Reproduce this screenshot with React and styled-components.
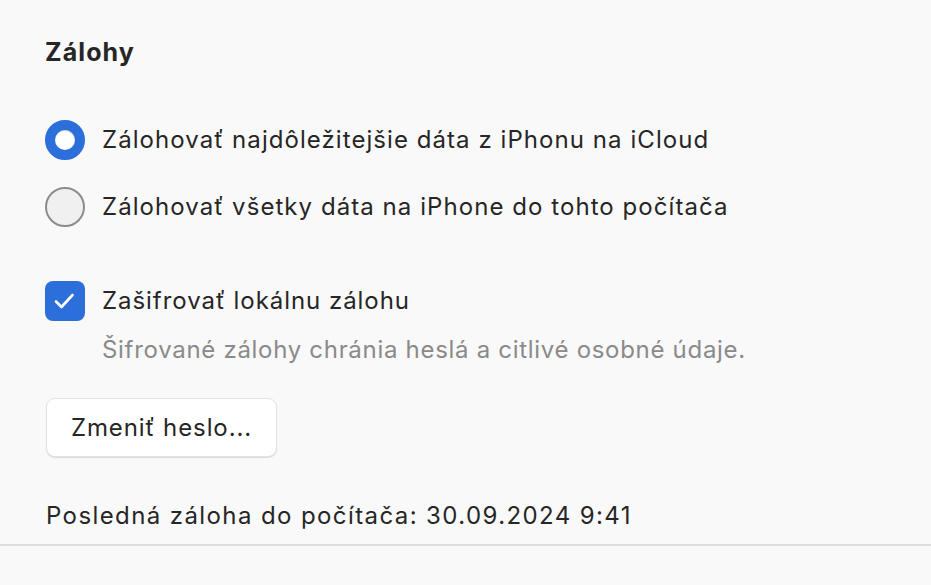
import React, { useState } from 'react';
import styled, { createGlobalStyle } from 'styled-components';

const GlobalStyle = createGlobalStyle`
  html, body {
    margin: 0;
    padding: 0;
    background: #f9f9f9;
  }
  body {
    font-family: Inter, "Noto Sans", "Liberation Sans", sans-serif;
    color: #262626;
  }
`;

const Panel = styled.div`
  width: 931px;
  height: 585px;
  display: flex;
  flex-direction: column;
  box-sizing: border-box;
`;

const Content = styled.div`
  display: flex;
  flex-direction: column;
  padding: 36px 0 0 45px;
`;

const Title = styled.h2`
  margin: 0;
  font-size: 25px;
  font-weight: 700;
  line-height: 32px;
  letter-spacing: 1.1px;
`;

const Options = styled.div`
  display: flex;
  flex-direction: column;
  gap: 27px;
  margin-top: 52px;
`;

const Row = styled.label`
  display: flex;
  align-items: center;
  gap: 17px;
  font-size: 24px;
  letter-spacing: ${(p) => p.$spacing || '1.06px'};
  line-height: 40px;
  cursor: default;
`;

const Radio = styled.span`
  width: 40px;
  height: 40px;
  border-radius: 50%;
  box-sizing: border-box;
  flex-shrink: 0;
  background: ${(p) => (p.checked ? '#ffffff' : '#f0f0f0')};
  border: ${(p) => (p.checked ? '10.5px solid #2c6fdb' : '2px solid #8c8c8c')};
  box-shadow: ${(p) => (p.checked ? 'inset 0 1px 1px rgba(0,0,0,0.15)' : 'none')};
`;

const Checkbox = styled.span`
  width: 40px;
  height: 40px;
  border-radius: 8px;
  background: #2c6fdb;
  flex-shrink: 0;
  display: flex;
  align-items: center;
  justify-content: center;
`;

const CheckGroup = styled.div`
  display: flex;
  flex-direction: column;
  margin-top: 54px;
`;

const Hint = styled.p`
  margin: 14px 0 0 57px;
  font-size: 24px;
  letter-spacing: 0.7px;
  line-height: 30px;
  color: #8a8a8a;
`;

const Button = styled.button`
  margin-top: 33px;
  align-self: flex-start;
  width: 231px;
  height: 59px;
  margin-left: 1px;
  background: #ffffff;
  border: 1px solid #e2e2e2;
  border-radius: 9px;
  box-shadow: 0 1px 1px rgba(0, 0, 0, 0.12);
  font-family: inherit;
  font-size: 24px;
  letter-spacing: 0.9px;
  color: #262626;
`;

const Footer = styled.p`
  margin: 44px 0 0 1px;
  font-size: 24px;
  letter-spacing: 1.4px;
  line-height: 30px;
`;

const Divider = styled.hr`
  margin: 13px 0 0;
  border: none;
  height: 2px;
  background: #dddddd;
`;

const options = [
  'Zálohovať najdôležitejšie dáta z iPhonu na iCloud',
  'Zálohovať všetky dáta na iPhone do tohto počítača',
];

const App = () => {
  const [selected, setSelected] = useState(0);

  return (
    <Panel>
      <GlobalStyle />
      <Content>
        <Title>Zálohy</Title>
        <Options>
          {options.map((text, i) => (
            <Row key={text} onClick={() => setSelected(i)}>
              <Radio checked={selected === i} />
              {text}
            </Row>
          ))}
        </Options>
        <CheckGroup>
          <Row $spacing="0.95px">
            <Checkbox>
              <svg width="26" height="26" viewBox="0 0 26 26" fill="none">
                <path d="M4 13.5l5.5 5.5 11-12" stroke="#ffffff" strokeWidth="2.6" strokeLinecap="round" strokeLinejoin="round" />
              </svg>
            </Checkbox>
            Zašifrovať lokálnu zálohu
          </Row>
          <Hint>Šifrované zálohy chránia heslá a citlivé osobné údaje.</Hint>
        </CheckGroup>
        <Button>Zmeniť heslo...</Button>
        <Footer>Posledná záloha do počítača: 30.09.2024 9:41</Footer>
      </Content>
      <Divider />
    </Panel>
  );
};

export default App;
